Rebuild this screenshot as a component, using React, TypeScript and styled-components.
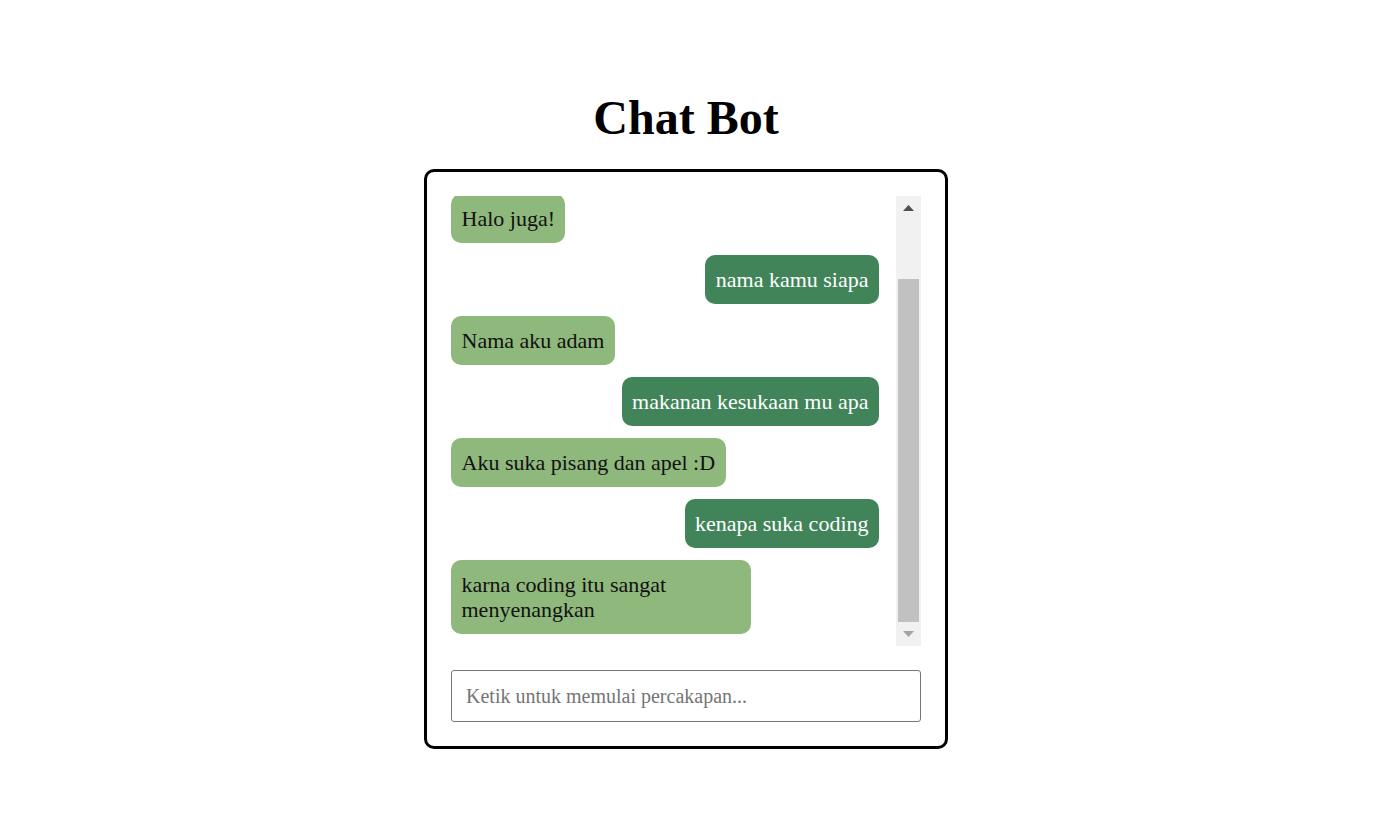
import React, {useLayoutEffect, useRef, useState} from 'react';
import styled, {createGlobalStyle} from 'styled-components';

const GlobalStyle = createGlobalStyle`
  body {
    margin: 0;
    background: #fff;
    font-family: 'Liberation Serif', 'Times New Roman', serif;
  }
`;

const Page = styled.div`
  display: flex;
  flex-direction: column;
  align-items: center;
  padding: 90px 27px 0 0;
`;

const Title = styled.h1`
  margin: 0 0 24px;
  font-size: 48px;
  font-weight: bold;
  color: #000;
`;

const ChatCard = styled.div`
  box-sizing: border-box;
  width: 524px;
  padding: 24px;
  border: 3px solid #000;
  border-radius: 10px;
  display: flex;
  flex-direction: column;
  gap: 24px;
`;

const ListFrame = styled.div`
  display: flex;
  height: 450px;
`;

const MessageList = styled.div`
  box-sizing: border-box;
  flex: 1;
  min-width: 0;
  overflow-y: scroll;
  scrollbar-width: none;
  display: flex;
  flex-direction: column;
  gap: 12px;
  padding: 15px 17px 12px 0;

  &::-webkit-scrollbar {
    display: none;
  }
`;

const ScrollRail = styled.div`
  width: 25px;
  flex-shrink: 0;
  display: flex;
  flex-direction: column;
  background: #f1f1f1;
`;

const RailButton = styled.button`
  height: 24px;
  flex-shrink: 0;
  padding: 0;
  border: 0;
  background: transparent;
  display: flex;
  align-items: center;
  justify-content: center;
  cursor: default;
`;

const RailTrack = styled.div`
  position: relative;
  flex: 1;
`;

const RailThumb = styled.div`
  position: absolute;
  left: 2px;
  right: 2px;
  background: #c1c1c1;
`;

const Bubble = styled.div<{$fromUser: boolean}>`
  box-sizing: border-box;
  max-width: 300px;
  flex-shrink: 0;
  padding: 12px 10.5px;
  border-radius: 10px;
  font-size: 22px;
  line-height: 25px;
  align-self: ${p => (p.$fromUser ? 'flex-end' : 'flex-start')};
  background: ${p => (p.$fromUser ? '#41845a' : '#8fb87c')};
  color: ${p => (p.$fromUser ? '#fff' : '#111')};
`;

const MessageInput = styled.input`
  box-sizing: border-box;
  width: 100%;
  height: 52px;
  padding: 0 14px;
  border: 1px solid #767676;
  border-radius: 3px;
  font-family: 'Liberation Serif', 'Times New Roman', serif;
  font-size: 20px;
  outline: none;

  &::placeholder {
    color: #757575;
  }
`;

type Message = {text: string; fromUser: boolean};

const initialMessages: Message[] = [
  {text: 'halo', fromUser: true},
  {text: 'Halo juga!', fromUser: false},
  {text: 'nama kamu siapa', fromUser: true},
  {text: 'Nama aku adam', fromUser: false},
  {text: 'makanan kesukaan mu apa', fromUser: true},
  {text: 'Aku suka pisang dan apel :D', fromUser: false},
  {text: 'kenapa suka coding', fromUser: true},
  {text: 'karna coding itu sangat menyenangkan', fromUser: false},
];

const Arrow = ({up, color}: {up: boolean; color: string}) => (
  <svg width="11" height="6" viewBox="0 0 11 6">
    <polygon points={up ? '0,6 5.5,0 11,6' : '0,0 5.5,6 11,0'} fill={color} />
  </svg>
);

type ScrollInfo = {top: number; height: number; client: number};

export default function App() {
  const [messages] = useState<Message[]>(initialMessages);
  const [draft, setDraft] = useState('');
  const [scroll, setScroll] = useState<ScrollInfo>({top: 0, height: 1, client: 1});
  const listRef = useRef<HTMLDivElement>(null);
  const trackRef = useRef<HTMLDivElement>(null);
  const [trackHeight, setTrackHeight] = useState(402);

  const measure = () => {
    const el = listRef.current;
    if (!el) return;
    setScroll({top: el.scrollTop, height: el.scrollHeight, client: el.clientHeight});
    if (trackRef.current) setTrackHeight(trackRef.current.clientHeight);
  };

  useLayoutEffect(() => {
    if (listRef.current) {
      listRef.current.scrollTop = listRef.current.scrollHeight;
    }
    measure();
  }, [messages]);

  const scrollBy = (dy: number) => listRef.current?.scrollBy({top: dy});

  const thumbHeight = (scroll.client / scroll.height) * trackHeight;
  const thumbTop = (scroll.top / scroll.height) * trackHeight;
  const atTop = scroll.top <= 0;
  const atBottom = scroll.top + scroll.client >= scroll.height - 1;

  return (
    <>
      <GlobalStyle />
      <Page>
        <Title>Chat Bot</Title>
        <ChatCard>
          <ListFrame>
            <MessageList ref={listRef} onScroll={measure}>
              {messages.map((m, i) => (
                <Bubble key={i} $fromUser={m.fromUser}>
                  {m.text}
                </Bubble>
              ))}
            </MessageList>
            <ScrollRail>
              <RailButton onClick={() => scrollBy(-40)}>
                <Arrow up color={atTop ? '#a3a3a3' : '#505050'} />
              </RailButton>
              <RailTrack ref={trackRef}>
                <RailThumb style={{top: thumbTop, height: thumbHeight}} />
              </RailTrack>
              <RailButton onClick={() => scrollBy(40)}>
                <Arrow up={false} color={atBottom ? '#a3a3a3' : '#505050'} />
              </RailButton>
            </ScrollRail>
          </ListFrame>
          <MessageInput
            value={draft}
            onChange={e => setDraft(e.target.value)}
            placeholder="Ketik untuk memulai percakapan..."
          />
        </ChatCard>
      </Page>
    </>
  );
}
